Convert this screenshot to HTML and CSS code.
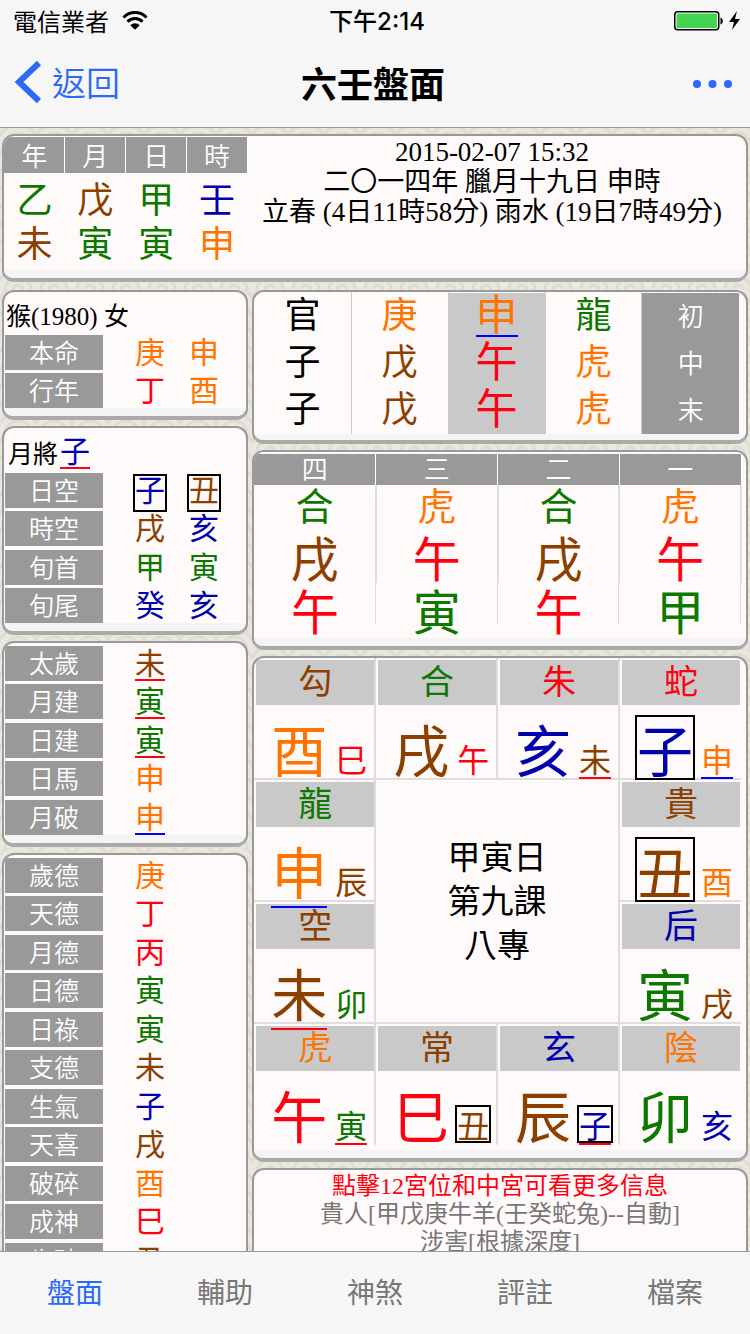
FILE: index.html
```html
<!DOCTYPE html>
<html lang="zh-Hant">
<head>
<meta charset="utf-8">
<meta name="viewport" content="width=device-width, initial-scale=1">
<title>六壬盤面</title>
<link rel="stylesheet" href="styles.css">
</head>
<body>
<header class="top">
  <div class="status">
    <div class="status-left">
      <span>電信業者</span>
      <svg width="26" height="20" viewBox="0 0 26 20" aria-hidden="true">
        <path d="M1.5 6.5a16 16 0 0 1 23 0M5.500 10.700a10.500 10.500 0 0 1 15 0" fill="none" stroke="#000" stroke-width="3"/>
        <path d="M8.300 14.200a6.600 6.600 0 0 1 9.400 0L13 18.800z" fill="#000"/>
      </svg>
    </div>
    <time class="clock">下午2:14</time>
    <div class="status-right">
      <svg width="67" height="22" viewBox="0 0 67 22" aria-hidden="true">
        <rect x=".75" y="1.750" width="44" height="18" rx="3" fill="#fff" stroke="#000" stroke-width="1.500"/>
        <rect x="2.500" y="3.500" width="40.500" height="14.500" rx="1" fill="#43d551"/>
        <path d="M46.500 7.500c3 1 3 6 0 7z" fill="#000"/>
        <path d="M63 1l-8 11h5l-2 8 8-11h-5z" fill="#000"/>
      </svg>
    </div>
  </div>
  <div class="navbar">
    <button class="back" type="button">
      <svg width="28" height="44" viewBox="0 0 28 44" aria-hidden="true"><path d="M25 3L5 22l20 19" fill="none" stroke="#2b69f6" stroke-width="6"/></svg>
      <span>返回</span>
    </button>
    <h1>六壬盤面</h1>
    <button class="more" type="button" aria-label="更多">
      <svg width="40" height="10" viewBox="0 0 40 10" aria-hidden="true"><g fill="#2b69f6"><circle cx="5" cy="5" r="4"/><circle cx="20.500" cy="5" r="4"/><circle cx="36" cy="5" r="4"/></g></svg>
    </button>
  </div>
</header>

<main class="content">
  <section class="card">
    <div class="summary">
      <table class="pillars">
        <thead><tr><th>年</th><th>月</th><th>日</th><th>時</th></tr></thead>
        <tbody>
          <tr><td class="wood">乙</td><td class="earth">戊</td><td class="wood">甲</td><td class="water">壬</td></tr>
          <tr><td class="earth">未</td><td class="wood">寅</td><td class="wood">寅</td><td class="metal">申</td></tr>
        </tbody>
      </table>
      <div class="dates">
        <p>2015-02-07 15:32</p>
        <p>二〇一四年 臘月十九日 申時</p>
        <p>立春 (4日11時58分) 雨水 (19日7時49分)</p>
      </div>
    </div>
  </section>

  <div class="columns">
    <div class="side">
      <section class="card">
        <h2 class="caption">猴(1980) 女</h2>
        <table class="list">
          <tr><th>本命</th><td><span class="v metal">庚</span></td><td><span class="v metal">申</span></td></tr>
          <tr><th>行年</th><td><span class="v fire">丁</span></td><td><span class="v metal">酉</span></td></tr>
        </table>
      </section>
      <section class="card">
        <h2 class="caption caption-general"><span>月將</span> <span class="v water line-red">子</span></h2>
        <table class="list">
          <tr><th>日空</th><td><span class="v water boxed">子</span></td><td><span class="v earth boxed">丑</span></td></tr>
          <tr><th>時空</th><td><span class="v earth">戌</span></td><td><span class="v water">亥</span></td></tr>
          <tr><th>旬首</th><td><span class="v wood">甲</span></td><td><span class="v wood">寅</span></td></tr>
          <tr><th>旬尾</th><td><span class="v water">癸</span></td><td><span class="v water">亥</span></td></tr>
        </table>
      </section>
      <section class="card">
        <table class="list list-top">
          <tr><th>太歲</th><td><span class="v earth line-red">未</span></td></tr>
          <tr><th>月建</th><td><span class="v wood line-red">寅</span></td></tr>
          <tr><th>日建</th><td><span class="v wood line-red">寅</span></td></tr>
          <tr><th>日馬</th><td><span class="v metal">申</span></td></tr>
          <tr><th>月破</th><td><span class="v metal line-blue">申</span></td></tr>
        </table>
      </section>
      <section class="card">
        <table class="list list-top">
          <tr><th>歲德</th><td><span class="v metal">庚</span></td></tr>
          <tr><th>天德</th><td><span class="v fire">丁</span></td></tr>
          <tr><th>月德</th><td><span class="v fire">丙</span></td></tr>
          <tr><th>日德</th><td><span class="v wood">寅</span></td></tr>
          <tr><th>日祿</th><td><span class="v wood">寅</span></td></tr>
          <tr><th>支德</th><td><span class="v earth">未</span></td></tr>
          <tr><th>生氣</th><td><span class="v water">子</span></td></tr>
          <tr><th>天喜</th><td><span class="v earth">戌</span></td></tr>
          <tr><th>破碎</th><td><span class="v metal">酉</span></td></tr>
          <tr><th>成神</th><td><span class="v fire">巳</span></td></tr>
          <tr><th>歲破</th><td><span class="v earth">丑</span></td></tr>
        </table>
      </section>
    </div>

    <div class="board-side">
      <section class="card card-thin">
        <table class="passes">
          <tr><td>官</td><td class="metal">庚</td><td class="branch metal"><span class="line-blue">申</span></td><td class="wood">龍</td><th>初</th></tr>
          <tr><td>子</td><td class="earth">戊</td><td class="branch fire"><span>午</span></td><td class="metal">虎</td><th>中</th></tr>
          <tr><td>子</td><td class="earth">戊</td><td class="branch fire"><span>午</span></td><td class="metal">虎</td><th>末</th></tr>
        </table>
      </section>
      <section class="card">
        <table class="lessons">
          <thead><tr><th>四</th><th>三</th><th>二</th><th>一</th></tr></thead>
          <tbody>
            <tr class="general"><td class="wood">合</td><td class="metal">虎</td><td class="wood">合</td><td class="metal">虎</td></tr>
            <tr><td class="earth">戌</td><td class="fire">午</td><td class="earth">戌</td><td class="fire">午</td></tr>
            <tr><td class="fire">午</td><td class="wood">寅</td><td class="fire">午</td><td class="wood">甲</td></tr>
          </tbody>
        </table>
      </section>
      <section class="card">
        <div class="board">
          <button class="palace" type="button"><span class="head earth">勾</span><span class="pair"><span class="big metal">酉</span><span class="small fire">巳</span></span></button>
          <button class="palace" type="button"><span class="head wood">合</span><span class="pair"><span class="big earth">戌</span><span class="small fire">午</span></span></button>
          <button class="palace" type="button"><span class="head fire">朱</span><span class="pair"><span class="big water">亥</span><span class="small earth line-red">未</span></span></button>
          <button class="palace edge" type="button"><span class="head fire">蛇</span><span class="pair"><span class="big water boxed">子</span><span class="small metal line-blue">申</span></span></button>
          <button class="palace" type="button"><span class="head wood">龍</span><span class="pair"><span class="big metal line-blue">申</span><span class="small earth">辰</span></span></button>
          <button class="centre" type="button"><span>甲寅日</span><span>第九課</span><span>八專</span></button>
          <button class="palace edge" type="button"><span class="head earth">貴</span><span class="pair"><span class="big earth boxed">丑</span><span class="small metal">酉</span></span></button>
          <button class="palace" type="button"><span class="head earth">空</span><span class="pair"><span class="big earth line-red">未</span><span class="small wood">卯</span></span></button>
          <button class="palace edge" type="button"><span class="head water">后</span><span class="pair"><span class="big wood">寅</span><span class="small earth">戌</span></span></button>
          <button class="palace last" type="button"><span class="head metal">虎</span><span class="pair"><span class="big fire">午</span><span class="small wood line-red">寅</span></span></button>
          <button class="palace last" type="button"><span class="head earth">常</span><span class="pair"><span class="big fire">巳</span><span class="small earth boxed">丑</span></span></button>
          <button class="palace last" type="button"><span class="head water">玄</span><span class="pair"><span class="big earth">辰</span><span class="small water boxed line-red">子</span></span></button>
          <button class="palace last edge" type="button"><span class="head metal">陰</span><span class="pair"><span class="big wood">卯</span><span class="small water">亥</span></span></button>
        </div>
      </section>
      <section class="card">
        <div class="notes">
          <p class="fire">點擊12宮位和中宮可看更多信息</p>
          <p>貴人[甲戊庚牛羊(壬癸蛇兔)--自動]</p>
          <p>涉害[根據深度]</p>
        </div>
      </section>
    </div>
  </div>
</main>

<nav class="tabs">
  <a href="#plate" class="active" aria-current="page">盤面</a>
  <a href="#assist">輔助</a>
  <a href="#spirits">神煞</a>
  <a href="#notes">評註</a>
  <a href="#files">檔案</a>
</nav>
</body>
</html>
```

FILE: styles.css
```css
:root {
  --sans: "Noto Sans CJK TC", "Noto Sans", sans-serif;
  --mixed: "Liberation Serif", "Noto Sans CJK TC", serif;
  --paper: #fffafa;
  --label: #999;
  --rule: #ddd;
  --blue: #2b69f6;
}

* { box-sizing: border-box; }

body {
  margin: 0;
  height: 100vh;
  display: flex;
  flex-direction: column;
  font-family: var(--sans);
  font-weight: 400;
  color: #000;
  background: #f6f6f6;
}

button {
  margin: 0;
  padding: 0;
  border: 0;
  background: none;
  font: inherit;
  color: inherit;
  cursor: pointer;
}

table { border-collapse: collapse; border-spacing: 0; }
th, td { padding: 0; font-weight: inherit; text-align: center; }
th { font-weight: 350; }
p, h1, h2 { margin: 0; font-weight: inherit; }

.wood { color: #0c7800; }
.fire { color: #ff0010; }
.earth { color: #8c4000; }
.metal { color: #ff7400; }
.water { color: #0000ac; }

/* Status and navigation bars */
.top { flex: none; border-bottom: 1px solid #999; }

.status {
  display: grid;
  grid-template-columns: 1fr auto 1fr;
  align-items: center;
  height: 40px;
  padding: 0 9px 0 13px;
  font-size: 24px;
  line-height: 40px;
}
.status-left { display: flex; align-items: center; gap: 13px; }
.status-right { display: flex; justify-content: flex-end; }
.clock { padding-top: 2px; font-family: Inter, var(--sans); font-weight: 500; }

.navbar {
  display: grid;
  grid-template-columns: 1fr auto 1fr;
  align-items: center;
  height: 87px;
  padding: 0 18px 4px 14px;
}
.navbar h1 { font-size: 36px; line-height: 44px; font-weight: 700; }
.back {
  justify-self: start;
  display: flex;
  align-items: center;
  gap: 10px;
  font-size: 34px;
  line-height: 44px;
  font-weight: 350;
  color: var(--blue);
}
.more { justify-self: end; display: flex; padding-top: 4px; }

/* Scrolling content */
.content {
  flex: 1;
  min-height: 0;
  overflow-y: auto;
  scrollbar-width: none;
  padding: 6px 2px;
  background-color: #e9e7de;
  background-image: repeating-radial-gradient(circle at 50% 100%, transparent 0 3px, #dfdcd2 4px 6px, transparent 7px 8px);
  background-size: 36px 18px;
}

.card {
  overflow: hidden;
  border: 2px solid #999;
  border-bottom: 4px solid #aaa;
  border-radius: 12px;
  background: var(--paper);
}
.card::after {
  content: "";
  display: block;
  height: 8px;
  background: #f4f4f4;
}
.card-thin::after { height: 6px; }

.summary { display: flex; padding-top: 1px; }
.pillars { flex: none; width: 244px; table-layout: fixed; }
.pillars th {
  height: 36px;
  font-size: 26px;
  line-height: 36px;
  color: #fff;
  background: var(--label);
  border-right: 1px solid #fff;
}
.pillars td { font-size: 36px; line-height: 44px; }
.pillars tbody { border-top: 2px solid var(--paper); border-bottom: 7px solid var(--paper); }
.dates {
  flex: 1;
  padding-right: 10px;
  font-family: var(--mixed);
  font-size: 27px;
  line-height: 30px;
  text-align: center;
}

.columns { display: flex; gap: 4px; padding-top: 8px; }
.side, .board-side { display: flex; flex-direction: column; gap: 6px; }
.side { flex: 0 0 33%; }
.board-side { flex: 1; min-width: 0; }

/* Label lists */
.caption {
  padding: 7px 2px 0;
  font-family: var(--mixed);
  font-size: 25px;
  line-height: 36px;
}
.caption-general { display: flex; align-items: center; padding-left: 4px; line-height: 37px; }

.list { display: block; padding-left: 1px; }
.list tbody { display: block; }
.list tr { display: flex; height: 38px; }
.list tr:nth-child(even) { height: 39px; }
.list tr:last-child { height: 35px; }
.list th {
  width: 98px;
  height: 35px;
  margin-right: 20px;
  font-size: 25px;
  line-height: 32px;
  color: #fff;
  background: var(--label);
}
.list td { width: 54px; padding-top: 1px; line-height: 0; }
.list-top { padding-top: 3px; }

.v, .big, .small {
  position: relative;
  display: inline-block;
  border: 2px solid transparent;
}
.boxed { border-color: #000; }
.v { width: 34px; height: 38px; font-family: var(--sans); font-size: 30px; line-height: 24px; text-align: center; }
.line-red::after, .line-blue::after {
  content: "";
  position: absolute;
  left: 0;
  right: 0;
  bottom: 2px;
  height: 2px;
  background: #ff0010;
}
.line-blue::after { background: #00f; }

/* Three passes */
.passes { width: calc(100% - 7px); table-layout: fixed; border-top: 1px solid var(--paper); }
.passes td, .passes th { height: 47px; vertical-align: top; line-height: 39px; }
.passes td { font-size: 36px; border-right: 1px solid #ccc; }
.passes .branch { font-size: 42px; background: #c9c9c9; }
.branch span { position: relative; display: block; width: 42px; height: 46px; margin: 0 auto; line-height: 37px; }
.passes th { font-size: 26px; line-height: 44px; color: #fff; background: var(--label); }

/* Four lessons */
.lessons {
  width: calc(100% - 4px);
  table-layout: fixed;
  border-top: 2px solid var(--paper);
}
.lessons th {
  height: 32px;
  vertical-align: top;
  font-size: 26px;
  line-height: 28px;
  color: #fff;
  background: var(--label);
  border-right: 1px solid #fff;
}
.lessons td { height: 53px; vertical-align: top; font-size: 48px; line-height: 53px; border-right: 2px solid var(--rule); }
.lessons .general td { height: 45px; font-size: 38px; line-height: 38px; }
.lessons tr:last-child td {
  height: 55px;
  border-right: 0;
  background: linear-gradient(var(--rule), var(--rule)) right top / 1px 41px no-repeat;
}

/* Twelve palaces */
.board {
  display: grid;
  grid-template-columns: repeat(4, 1fr);
  grid-auto-rows: 122px;
  padding: 0 4px 4px 0;
}
.palace {
  display: flex;
  flex-direction: column;
  padding: 2px 0 0 2px;
  border-right: 2px solid var(--rule);
  border-bottom: 2px solid var(--rule);
}
.palace.edge { border-right-color: var(--paper); }
.palace.last { border-bottom-color: var(--paper); }
.head {
  align-self: stretch;
  flex: none;
  height: 45px;
  font-size: 34px;
  line-height: 40px;
  text-align: center;
  background: #c9c9c9;
}
.pair {
  display: flex;
  align-items: baseline;
  gap: 4px;
  padding: 10px 0 0 13px;
}
.big { width: 60px; height: 65px; font-size: 56px; line-height: 61px; text-align: center; z-index: 1; }
.small { width: 36px; height: 38px; font-size: 32px; line-height: 34px; text-align: center; }
.big::after { bottom: -8px; }
.small::after { bottom: -4px; }
.centre {
  grid-column: 2 / 4;
  grid-row: 2 / 4;
  display: flex;
  flex-direction: column;
  align-items: center;
  justify-content: center;
  padding-bottom: 3px;
  font-size: 33px;
  line-height: 44px;
  border-right: 2px solid var(--rule);
  border-bottom: 2px solid var(--rule);
}

.notes {
  padding-top: 2px;
  font-family: var(--mixed);
  font-size: 24px;
  line-height: 28px;
  text-align: center;
  color: #777;
}
.notes .fire { color: #ff0010; }

/* Tab bar */
.tabs {
  flex: none;
  display: flex;
  height: 83px;
  border-top: 1px solid #999;
}
.tabs a {
  flex: 1;
  font-size: 28px;
  line-height: 79px;
  text-align: center;
  text-decoration: none;
  color: #777;
}
.tabs .active { color: var(--blue); }
```
